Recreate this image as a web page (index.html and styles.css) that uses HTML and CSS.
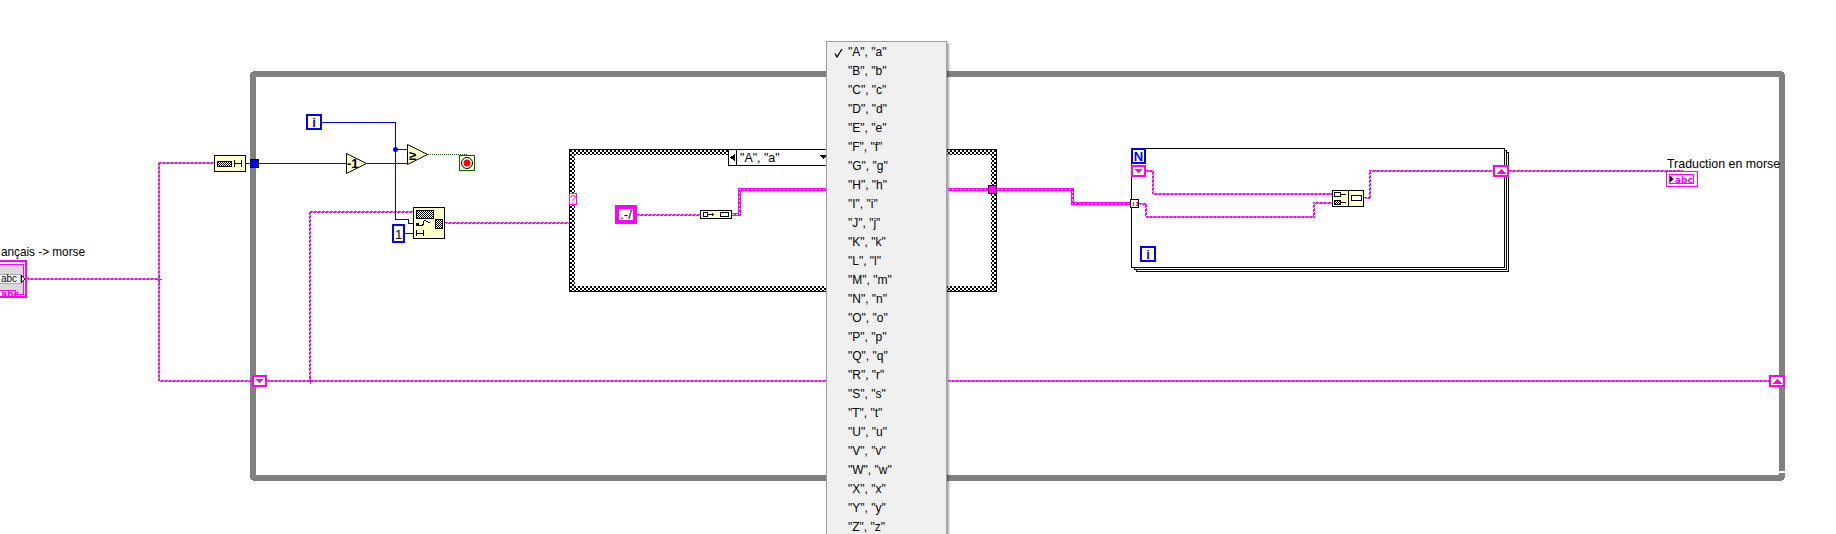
FILE: index.html
```html
<!DOCTYPE html>
<html>

<head>
    <meta charset="utf-8" />
    <meta name="viewport" content="width=device-width, initial-scale=1.0">
    <title>Traduction en morse</title>
    <link rel="stylesheet" href="styles.css">
</head>

<body>
    <div class="diagram">
        <svg class="wires" width="1836" height="534" viewBox="0 0 1836 534">
            <defs>
                <pattern id="checker" width="4" height="4" patternUnits="userSpaceOnUse">
                    <rect width="4" height="4" fill="#fff" />
                    <rect width="2" height="2" fill="#000" />
                    <rect x="2" y="2" width="2" height="2" fill="#000" />
                </pattern>
                <pattern id="checker-small" width="2" height="2" patternUnits="userSpaceOnUse">
                    <rect width="2" height="2" fill="#fff" />
                    <rect width="1" height="1" fill="#000" />
                    <rect x="1" y="1" width="1" height="1" fill="#000" />
                </pattern>
                <g id="string-wires">
                    <path d="M27 278.5H158.5" />
                    <path d="M214 162.5H158.5V380.5H252" />
                    <path d="M267 380.5H827" />
                    <path d="M948 380.5H1769" />
                    <path d="M413 211.5H309.5V380" />
                    <path d="M445 222.5H569" />
                    <path d="M637 214.5H700" />
                    <path d="M1139 203.5H1145.5V216.5H1313.5V202.5H1332" />
                    <path d="M1146 170.5H1152.5V193.5H1332" />
                    <path d="M1364 197.5H1369.5V170.5H1493" />
                    <path d="M1509 170.5H1683" />
                </g>
            </defs>

            <!-- structures -->
            <rect class="while-loop" x="253" y="74" width="1529" height="404" rx="2" />
            <rect class="gap" x="1778" y="471" width="8" height="2" />
            <rect class="gap" x="1777" y="473" width="2" height="1" />

            <rect class="case-frame" x="569.5" y="149.5" width="427" height="142" />
            <rect class="case-inner" x="575" y="155" width="416" height="131" />

            <rect class="for-page" x="1136.5" y="152.5" width="372" height="119" />
            <rect class="for-page" x="1134.5" y="150.5" width="372" height="119" />
            <rect class="for-page" x="1131.5" y="148.5" width="373" height="119" />

            <!-- wires -->
            <use href="#string-wires" class="wire-thin" />
            <use href="#string-wires" class="wire-thin" transform="translate(1 1)" stroke-dashoffset="2" />
            <path class="wire-thick" d="M732 214.5H739V189.5H827" />
            <path class="wire-thick" d="M948 189.5H988" />
            <path class="wire-thick" d="M997 189.5H1072V203.5H1131" />
            <path class="wire-thick-core" d="M732 214.5H739V189.5H827" />
            <path class="wire-thick-core" d="M948 189.5H988" />
            <path class="wire-thick-core" d="M997 189.5H1072V203.5H1131" />

            <path class="wire-blue" d="M246 163H346M367 163H408" />
            <path class="wire-blue" d="M322 122.5H395.5V219.5H408V223.5H413" />
            <path class="wire-blue" d="M395 149.5H407M405 233.5H413" />
            <path class="wire-bool" d="M428 154.5H468V156" />
            <circle class="junction-blue" cx="395.5" cy="149.5" r="2.5" />
            <path class="junction-pink" d="M159 276v6M156 279h6M310 378v6M307 381h6" />

            <!-- control: Français -> morse, cut by the left edge -->
            <text class="label" x="1" y="256" textLength="84" lengthAdjust="spacingAndGlyphs">ançais -&gt; morse</text>
            <rect class="pink-box" x="-10" y="261" width="36" height="36" />
            <rect class="control-body" x="-10" y="264" width="33" height="30" />
            <rect class="control-text" x="-10" y="274.5" width="30" height="9" />
            <text class="control-abc" x="1" y="282">abc</text>
            <path class="control-arrow" d="M21.5 275.5l3.5 3.5-3.5 3.5z" />
            <rect class="pink-tag" x="-5" y="290.5" width="20" height="6" />
            <text class="tag-abc" x="1" y="297">abc</text>

            <!-- string length -->
            <rect class="node" x="214.5" y="155.5" width="31" height="16" />
            <rect class="node-chk" x="217.5" y="161.5" width="14" height="5" />
            <path class="glyph" d="M234.5 160v7M241.5 160v7M234 163.5h8" />
            <rect class="tunnel-blue" x="250.5" y="159.5" width="8" height="8" />

            <!-- i terminal of the while loop -->
            <rect class="blue-box" x="307" y="115" width="14" height="14" />
            <text class="blue-letter" x="314" y="127" text-anchor="middle">i</text>

            <!-- decrement and compare -->
            <path class="prim" d="M346.5 153.5V173.5L366.5 163.5Z" />
            <text class="prim-text" x="347" y="168">-1</text>
            <path class="prim" d="M407.5 144.5V164.5L427.5 154.5Z" />
            <text class="prim-text" x="409" y="160">≥</text>

            <!-- stop -->
            <rect class="stop-box" x="459.5" y="155.5" width="15" height="15" />
            <circle class="stop-ring" cx="467" cy="163" r="5.5" />
            <circle class="stop-dot" cx="467" cy="163" r="3.5" />

            <!-- string subset -->
            <rect class="node" x="413.5" y="207.5" width="31" height="31" />
            <rect class="node-chk" x="416.5" y="210.5" width="17" height="8" />
            <rect class="glyph-fill" x="416" y="223" width="3" height="3" />
            <path class="glyph" d="M419 225.5h3l1-1V221M424 220l6 3" />
            <rect class="node-chk" x="435.5" y="219.5" width="7" height="9" />
            <path class="glyph" d="M416.5 230v6M423.5 230v6M417 233.5h6" />
            <rect class="blue-box-num" x="393" y="225" width="11" height="17" />
            <text class="const-text" x="398.5" y="239" text-anchor="middle">1</text>

            <!-- case structure selector -->
            <rect class="selector" x="728.5" y="149.5" width="99" height="16" />
            <path class="hairline" d="M736.5 150V165" />
            <path class="glyph-solid" d="M730 157.5l5-4v8z" />
            <text class="label" x="740" y="162">"A", "a"</text>
            <path class="glyph-solid" d="M820 155h7l-3.5 4z" />
            <rect class="sel-term" x="569.5" y="193.5" width="7" height="11" />
            <text class="sel-text" x="573" y="203" text-anchor="middle">?</text>

            <!-- constant and trim -->
            <rect class="pink-const" x="617" y="207" width="18" height="15" />
            <text class="const-text" x="626" y="219" text-anchor="middle">.-/</text>
            <rect class="node" x="700.5" y="210.5" width="31" height="8" />
            <rect class="hollow" x="703.5" y="212.5" width="4" height="4" />
            <path class="glyph" d="M708 214.5h6M712.5 213v3" />
            <rect class="hollow" x="720.5" y="212.5" width="8" height="4" />
            <rect class="tunnel-pink" x="988.5" y="185.5" width="8" height="8" />

            <!-- for loop -->
            <rect class="blue-box" x="1132" y="149" width="13" height="14" />
            <text class="blue-letter" x="1138.5" y="161" text-anchor="middle">N</text>
            <rect class="blue-box" x="1141" y="247" width="14" height="14" />
            <text class="blue-letter" x="1148" y="259" text-anchor="middle">i</text>
            <rect class="shift" x="1132" y="166" width="13" height="10" />
            <path class="shift-arrow" d="M1134 169h9l-4.5 4z" />
            <rect class="shift" x="1494" y="166" width="14" height="10" />
            <path class="shift-arrow" d="M1496 174h10l-5-5z" />
            <rect class="array-tunnel" x="1130.5" y="199.5" width="8" height="8" />
            <path class="array-mark" d="M1134 202h-1v3h1M1136 202h1v3h-1" />

            <!-- concat node -->
            <rect class="node" x="1332.5" y="190.5" width="31" height="16" />
            <path class="hairline" d="M1348.5 191V206" />
            <rect class="hollow" x="1334.5" y="192.5" width="6" height="4" />
            <rect class="node-chk" x="1334.5" y="200.5" width="6" height="4" />
            <path class="glyph" d="M1341 194.5h5M1341 202.5h5" />
            <rect class="hollow" x="1351.5" y="195.5" width="10" height="5" />

            <!-- shift registers on the while loop -->
            <rect class="shift" x="253" y="376" width="13" height="10" />
            <path class="shift-arrow" d="M255 379h9l-4.5 4z" />
            <rect class="shift" x="1770" y="376" width="14" height="10" />
            <path class="shift-arrow" d="M1772 384h10l-5-5z" />

            <!-- indicator -->
            <text class="label" x="1667" y="168">Traduction en morse</text>
            <rect class="indicator" x="1666.5" y="171.5" width="31" height="15" />
            <rect class="indicator" x="1669.5" y="174.5" width="24" height="9" />
            <rect class="indicator-tint" x="1670" y="175" width="5" height="8" />
            <path class="glyph-solid" d="M1670 175.5l3 3.5-3 3.5z" />
            <text class="indicator-abc" x="1675" y="183">abc</text>
        </svg>

        <ul class="menu">
            <li class="menu-item">
                <svg class="check" width="10" height="10" viewBox="0 0 10 10">
                    <path d="M1 5.5l2 3.5 5-8" />
                </svg>"A", "a"
            </li>
            <li class="menu-item">"B", "b"</li>
            <li class="menu-item">"C", "c"</li>
            <li class="menu-item">"D", "d"</li>
            <li class="menu-item">"E", "e"</li>
            <li class="menu-item">"F", "f"</li>
            <li class="menu-item">"G", "g"</li>
            <li class="menu-item">"H", "h"</li>
            <li class="menu-item">"I", "i"</li>
            <li class="menu-item">"J", "j"</li>
            <li class="menu-item">"K", "k"</li>
            <li class="menu-item">"L", "l"</li>
            <li class="menu-item">"M", "m"</li>
            <li class="menu-item">"N", "n"</li>
            <li class="menu-item">"O", "o"</li>
            <li class="menu-item">"P", "p"</li>
            <li class="menu-item">"Q", "q"</li>
            <li class="menu-item">"R", "r"</li>
            <li class="menu-item">"S", "s"</li>
            <li class="menu-item">"T", "t"</li>
            <li class="menu-item">"U", "u"</li>
            <li class="menu-item">"V", "v"</li>
            <li class="menu-item">"W", "w"</li>
            <li class="menu-item">"X", "x"</li>
            <li class="menu-item">"Y", "y"</li>
            <li class="menu-item">"Z", "z"</li>
        </ul>
    </div>
</body>

</html>
```

FILE: styles.css
```css
html,
body {
    margin: 0;
    height: 100%;
    overflow: hidden;
    background-color: #fff;
}

/* free canvas of the block diagram */
.diagram {
    position: relative;
    width: 1836px;
    height: 534px;
    overflow: hidden;
    font-family: "Liberation Sans", Arial, sans-serif;
    font-size: 13px;
    color: #000;
}

.wires {
    position: absolute;
    top: 0;
    left: 0;
    display: block;
}

.wires rect,
.wires path,
.wires use {
    shape-rendering: crispEdges;
}

/* structures */
.while-loop {
    fill: none;
    stroke: #808080;
    stroke-width: 6;
}

.gap {
    fill: #fff;
}

.case-frame {
    fill: url(#checker);
    stroke: #000;
}

.case-inner {
    fill: #fff;
}

.for-page {
    fill: #fff;
    stroke: #000;
}

/* wires */
.wire-thin {
    fill: none;
    stroke: #f0f;
    stroke-width: 1;
    stroke-dasharray: 3 1;
}

.wire-thick {
    fill: none;
    stroke: #f0f;
    stroke-width: 3;
}

.wire-thick-core {
    fill: none;
    stroke: #fff;
    stroke-width: 1;
    stroke-dasharray: 2 2;
}

.wire-blue {
    fill: none;
    stroke: #00f;
    stroke-width: 1;
}

.wire-bool {
    fill: none;
    stroke: #060;
    stroke-width: 1;
    stroke-dasharray: 1 1;
}

.junction-blue {
    fill: #00f;
}

.junction-pink {
    fill: none;
    stroke: #f0f;
    stroke-width: 1;
}

/* nodes */
.node,
.prim {
    fill: #ffc;
    stroke: #000;
    stroke-width: 1;
}

.wires .prim {
    shape-rendering: auto;
}

.node-chk {
    fill: url(#checker-small);
    stroke: #000;
}

.hollow {
    fill: #fff;
    stroke: #000;
}

.glyph {
    fill: none;
    stroke: #000;
}

.glyph-solid,
.glyph-fill {
    fill: #000;
}

.hairline {
    stroke: #000;
}

.prim-text {
    font-size: 13px;
    font-weight: bold;
}

.label {
    font-size: 12.4px;
    fill: #000;
}

.const-text {
    font-size: 13px;
    fill: #000;
}

/* terminals */
.blue-box,
.blue-box-num {
    fill: #ffc;
    stroke: #00f;
    stroke-width: 2;
}

.blue-box-num {
    fill: #fff;
}

.blue-letter {
    font-size: 13px;
    font-weight: bold;
    fill: #00f;
}

.tunnel-blue {
    fill: #00f;
    stroke: #000;
}

.tunnel-pink {
    fill: #f0f;
    stroke: #000;
}

.shift {
    fill: #ffc;
    stroke: #f0f;
    stroke-width: 2;
}

.shift-arrow {
    fill: #f0f;
}

.array-tunnel {
    fill: #ffc;
    stroke: #000;
}

.array-mark {
    fill: none;
    stroke: #f0f;
}

.stop-box {
    fill: #ffc;
    stroke: #060;
}

.stop-ring {
    fill: #fff;
    stroke: #000;
}

.stop-dot {
    fill: #f00;
}

.selector {
    fill: #fff;
    stroke: #000;
}

.sel-term {
    fill: #fff;
    stroke: #f0f;
}

.sel-text {
    font-size: 11px;
    fill: #f0f;
}

.pink-const {
    fill: #fff;
    stroke: #f0f;
    stroke-width: 4;
}

/* string control and indicator */
.pink-box {
    fill: #fff;
    stroke: #f0f;
    stroke-width: 2;
}

.control-body {
    fill: #d8d8d8;
    stroke: #f0f;
    stroke-width: 1;
}

.control-text {
    fill: #fff;
    stroke: #aaa;
}

.control-abc {
    font-size: 10px;
    fill: #000;
}

.control-arrow {
    fill: #fff;
    stroke: #000;
}

.pink-tag {
    fill: #fff;
    stroke: #f0f;
}

.tag-abc,
.indicator-abc {
    font-family: "DejaVu Sans", sans-serif;
    font-size: 9px;
    font-weight: bold;
    fill: #f0f;
}

.indicator {
    fill: none;
    stroke: #f0f;
}

.indicator-tint {
    fill: #fcf;
}

/* selector popup menu */
.menu {
    position: absolute;
    top: 41px;
    left: 826px;
    width: 119px;
    margin: 0;
    padding: 1px 0 0;
    list-style: none;
    display: flex;
    flex-direction: column;
    background-color: #f0f0f0;
    border: 1px solid #a0a0a0;
    box-shadow: 2px 2px 2px rgba(0, 0, 0, 0.35);
}

.menu-item {
    position: relative;
    height: 19px;
    line-height: 19px;
    padding-left: 21px;
    font-size: 12px;
    white-space: nowrap;
}

.check {
    position: absolute;
    top: 5px;
    left: 7px;
}

.check path {
    fill: none;
    stroke: #000;
    stroke-width: 1.3;
}
```
